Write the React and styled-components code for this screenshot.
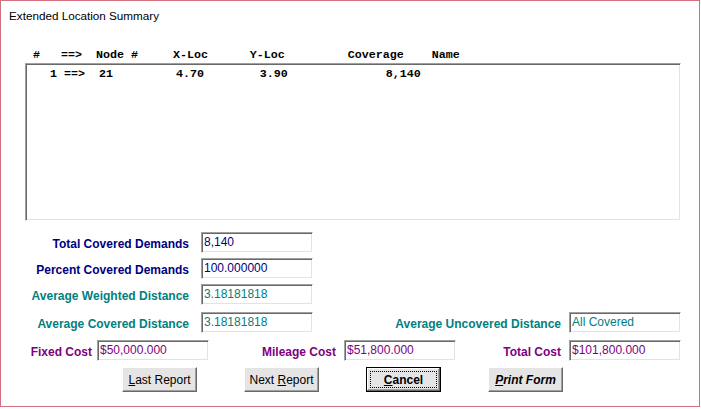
import React from "react";
import styled, { createGlobalStyle } from "styled-components";

const GlobalStyle = createGlobalStyle`
  html, body {
    margin: 0;
    padding: 0;
    background: #ffffff;
  }
  body {
    font-family: "Liberation Sans", Arial, sans-serif;
  }
`;

const COLORS = {
  navy: "#000080",
  teal: "#008080",
  purple: "#800080",
};

const Frame = styled.div`
  width: 700px;
  height: 407px;
  box-sizing: border-box;
  border: 1px solid #d2707f;
  background: #ffffff;
  display: flex;
  flex-direction: column;
`;

const Title = styled.div`
  padding: 7px 0 0 8px;
  font-size: 11.7px;
  line-height: 16px;
  color: #000000;
`;

const ListHeader = styled.pre`
  margin: 24px 0 0 32px;
  font-family: "Liberation Mono", "Courier New", monospace;
  font-weight: bold;
  font-size: 11.67px;
  line-height: 14px;
  color: #000000;
`;

const ListBox = styled.div`
  margin: 1px 0 0 24px;
  width: 656px;
  height: 158px;
  box-sizing: border-box;
  border: 1px solid;
  border-color: #a0a0a0 #ffffff #ffffff #a0a0a0;
  box-shadow: inset 1px 1px #696969, inset -1px -1px #e3e3e3;
  background: #ffffff;
  padding: 3px 0 0 3px;
`;

const ListRow = styled.pre`
  margin: 0;
  font-family: "Liberation Mono", "Courier New", monospace;
  font-weight: bold;
  font-size: 11.67px;
  line-height: 14px;
  color: #000000;
`;

const Form = styled.div`
  margin-top: 11px;
  display: flex;
  flex-direction: column;
`;

const Row = styled.div`
  display: flex;
  align-items: center;
  height: 21px;
  margin-top: ${(p) => p.$gap || 0}px;
`;

const Label = styled.div`
  width: ${(p) => p.$w}px;
  margin-right: ${(p) => p.$space || 8}px;
  padding-top: 2px;
  text-align: right;
  font-weight: bold;
  font-size: 12px;
  white-space: nowrap;
  color: ${(p) => COLORS[p.$tone]};
`;

const Field = styled.div`
  width: 112px;
  height: 21px;
  box-sizing: border-box;
  border: 1px solid;
  border-color: #a0a0a0 #ffffff #ffffff #a0a0a0;
  box-shadow: inset 1px 1px #696969, inset -1px -1px #e3e3e3;
  background: #ffffff;
  padding: 0 0 0 2px;
  font-size: 12px;
  line-height: 18px;
  white-space: nowrap;
  overflow: hidden;
  color: ${(p) => COLORS[p.$tone]};
`;

const ButtonBar = styled.div`
  display: flex;
  gap: 47px;
  margin: 6px 0 0 121px;
`;

const Button = styled.div`
  width: 75px;
  height: 25px;
  box-sizing: border-box;
  display: flex;
  align-items: center;
  justify-content: center;
  background: #e5e5e5;
  border: 1px solid;
  border-color: #ffffff #696969 #696969 #ffffff;
  box-shadow: inset -1px -1px #a0a0a0, inset 1px 1px #e3e3e3;
  font-size: 12px;
  color: #000000;
  font-weight: ${(p) => (p.$bold ? "bold" : "normal")};
  font-style: ${(p) => (p.$italic ? "italic" : "normal")};
  position: relative;

  ${(p) =>
    p.$default &&
    `
    border: 1px solid #000000;
    box-shadow: inset -1px -1px #696969, inset 1px 1px #ffffff, inset -2px -2px #a0a0a0;
    &::after {
      content: "";
      position: absolute;
      inset: 3px;
      border: 1px dotted #000000;
    }
  `}
`;

const HEADER = "#   ==>  Node #     X-Loc      Y-Loc         Coverage    Name";
const ROW = "   1 ==>  21         4.70        3.90              8,140";

export default function App() {
  return (
    <>
      <GlobalStyle />
      <Frame>
        <Title>Extended Location Summary</Title>
        <ListHeader>{HEADER}</ListHeader>
        <ListBox>
          <ListRow>{ROW}</ListRow>
        </ListBox>

        <Form>
          <Row>
            <Label $w={188} $space={12} $tone="navy">
              Total Covered Demands
            </Label>
            <Field $tone="navy">8,140</Field>
          </Row>
          <Row $gap={5}>
            <Label $w={188} $space={12} $tone="navy">
              Percent Covered Demands
            </Label>
            <Field $tone="navy">100.000000</Field>
          </Row>
          <Row $gap={5}>
            <Label $w={188} $space={12} $tone="teal">
              Average Weighted Distance
            </Label>
            <Field $tone="teal">3.18181818</Field>
          </Row>
          <Row $gap={7}>
            <Label $w={188} $space={12} $tone="teal">
              Average Covered Distance
            </Label>
            <Field $tone="teal">3.18181818</Field>
            <Label $w={248} $space={8} $tone="teal">
              Average Uncovered Distance
            </Label>
            <Field $tone="teal">All Covered</Field>
          </Row>
          <Row $gap={7}>
            <Label $w={91} $space={5} $tone="purple">
              Fixed Cost
            </Label>
            <Field $tone="purple">$50,000.000</Field>
            <Label $w={127} $space={8} $tone="purple">
              Mileage Cost
            </Label>
            <Field $tone="purple">$51,800.000</Field>
            <Label $w={105} $space={8} $tone="purple">
              Total Cost
            </Label>
            <Field $tone="purple">$101,800.000</Field>
          </Row>
        </Form>

        <ButtonBar>
          <Button>
            <span>
              <u>L</u>ast Report
            </span>
          </Button>
          <Button>
            <span>
              Next <u>R</u>eport
            </span>
          </Button>
          <Button $bold $default>
            <span>
              <u>C</u>ancel
            </span>
          </Button>
          <Button $bold $italic>
            <span>
              <u>P</u>rint Form
            </span>
          </Button>
        </ButtonBar>
      </Frame>
    </>
  );
}
